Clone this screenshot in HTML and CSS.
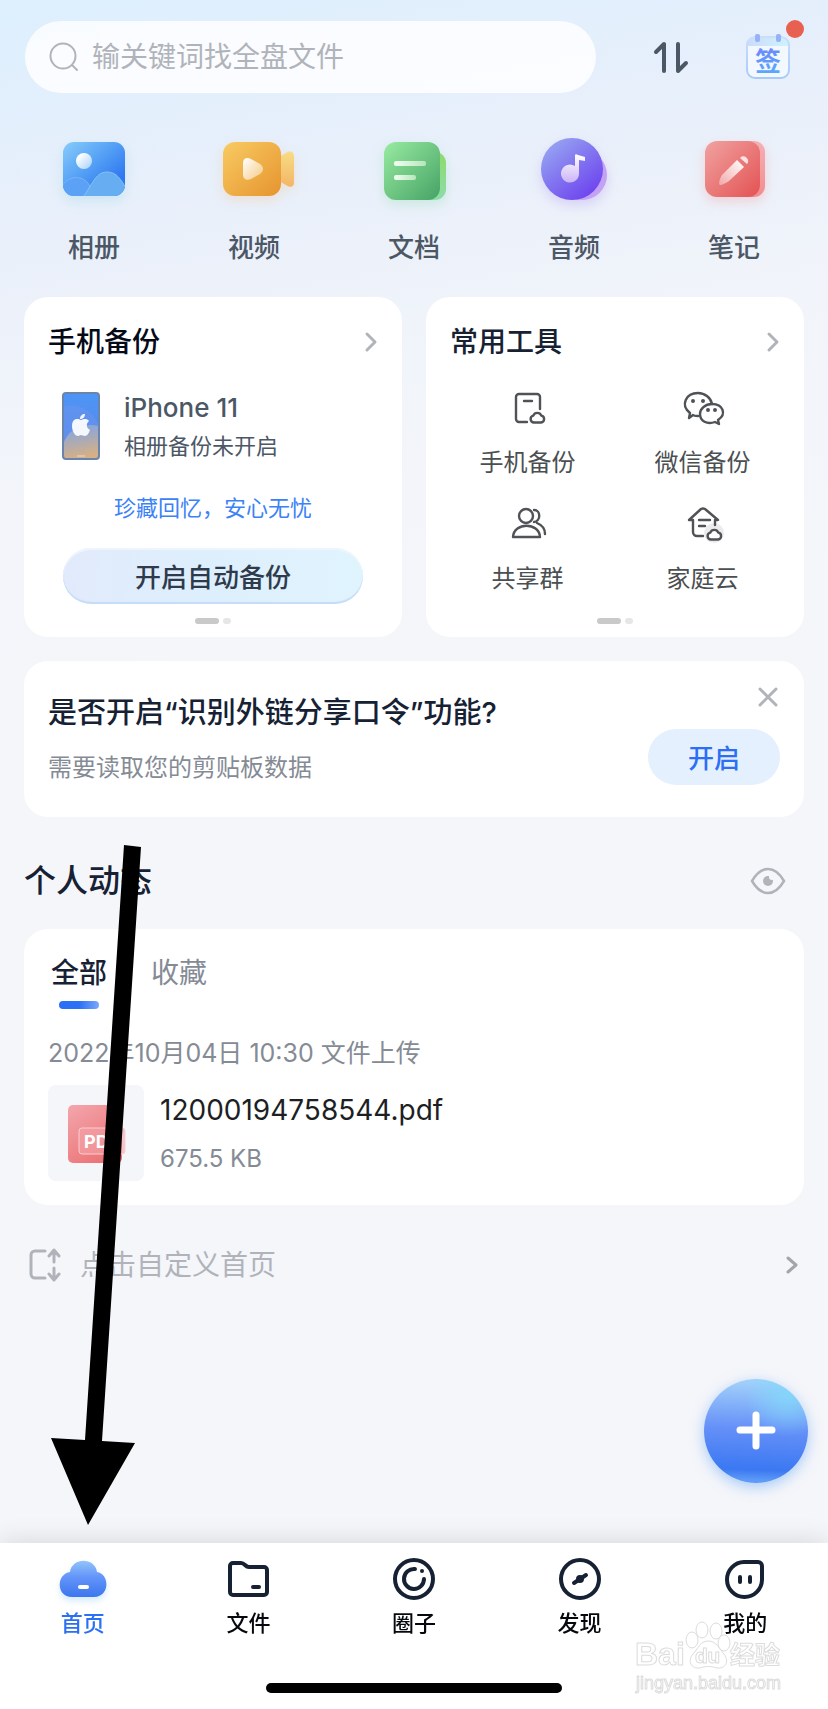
FILE: index.html
```
<!DOCTYPE html>
<html lang="zh-CN">
<head>
    <meta charset="UTF-8">
    <meta name="viewport" content="width=device-width, initial-scale=1.0">
    <title>首页</title>
    <link rel="stylesheet" href="styles.css">
</head>
<body>
    <div class="page">
        <header class="topbar">
            <label class="search">
                <svg width="30" height="30" viewBox="0 0 30 30" fill="none" stroke="#b0b4ba" stroke-width="2" stroke-linecap="round">
                    <circle cx="14" cy="14" r="12.5"/>
                    <path d="M23 23l5 5"/>
                </svg>
                <input type="search" placeholder="输关键词找全盘文件" aria-label="搜索">
            </label>
            <button class="icon-btn" aria-label="传输列表">
                <svg width="36" height="34" viewBox="0 0 36 34" fill="none" stroke="#4c5766" stroke-width="4" stroke-linecap="round" stroke-linejoin="round">
                    <path d="M3 12l8-8v27"/>
                    <path d="M25 4v27l8-8"/>
                </svg>
            </button>
            <button class="icon-btn sign" aria-label="签到">
                <svg width="44" height="46" viewBox="0 0 44 46">
                    <defs>
                        <linearGradient id="signText" x1="0" y1="0" x2="0" y2="1">
                            <stop offset="0" stop-color="#6f86fb"/>
                            <stop offset="1" stop-color="#57adfb"/>
                        </linearGradient>
                        <linearGradient id="signTop" x1="0" y1="0" x2="1" y2="0">
                            <stop offset="0" stop-color="#ccdbfb"/>
                            <stop offset="1" stop-color="#cdf3fd"/>
                        </linearGradient>
                        <linearGradient id="signLine" x1="0" y1="0" x2="0" y2="1">
                            <stop offset="0" stop-color="#cddcfb"/>
                            <stop offset="1" stop-color="#a6cbfa"/>
                        </linearGradient>
                    </defs>
                    <rect x="1" y="3" width="42" height="41" rx="8" fill="#f3f8fe"/>
                    <path d="M1 12v-1a8 8 0 0 1 8-8h26a8 8 0 0 1 8 8v1z" fill="url(#signTop)"/>
                    <rect x="1" y="3" width="42" height="41" rx="8" fill="none" stroke="url(#signLine)" stroke-width="2"/>
                    <rect x="9" y="0" width="5" height="8" rx="2" fill="#96b1f6"/>
                    <rect x="30" y="0" width="5" height="8" rx="2" fill="#96b1f6"/>
                    <text x="22" y="37" text-anchor="middle" class="sign-text" fill="url(#signText)">签</text>
                </svg>
                <span class="badge"></span>
            </button>
        </header>

        <nav class="apps">
            <a href="#">
                <svg class="glow-blue" width="80" height="72" viewBox="0 0 80 72">
                    <defs>
                        <linearGradient id="album" x1="0" y1="0" x2="1" y2="1">
                            <stop offset="0" stop-color="#88cdfb"/>
                            <stop offset=".45" stop-color="#549ff5"/>
                            <stop offset=".8" stop-color="#2f78f0"/>
                        </linearGradient>
                        <linearGradient id="moon" x1="0" y1="0" x2="1" y2="1">
                            <stop offset="0.2" stop-color="#fff"/>
                            <stop offset="1" stop-color="#9fd0fa"/>
                        </linearGradient>
                        <clipPath id="albumClip"><rect x="9" y="8" width="62" height="54" rx="11"/></clipPath>
                    </defs>
                    <g clip-path="url(#albumClip)">
                        <rect x="9" y="8" width="62" height="54" fill="url(#album)"/>
                        <path d="M7 54C13 41 29 40 36 52l-6 12H7z" fill="#5ba1f5" stroke="#78b4f8"/>
                        <path d="M29 63C38 52 41 38 53 38c10 0 14 8 19 16v10H29z" fill="#66adf2" stroke="#86c2f8"/>
                    </g>
                    <circle cx="30" cy="27" r="8" fill="url(#moon)"/>
                </svg>
                <span>相册</span>
            </a>
            <a href="#">
                <svg class="glow-orange" width="80" height="72" viewBox="0 0 80 72">
                    <defs>
                        <linearGradient id="video" x1="0" y1="0" x2="1" y2="1">
                            <stop offset="0" stop-color="#f9cb62"/>
                            <stop offset="1" stop-color="#e6942f"/>
                        </linearGradient>
                        <linearGradient id="lens" x1="0" y1="0" x2="0" y2="1">
                            <stop offset="0" stop-color="#f8dc85"/>
                            <stop offset="1" stop-color="#f3b566"/>
                        </linearGradient>
                        <linearGradient id="play" x1="0" y1="0" x2="1" y2="1">
                            <stop offset="0" stop-color="#fff"/>
                            <stop offset="1" stop-color="#f5c983"/>
                        </linearGradient>
                    </defs>
                    <path d="M65 23l7-4c4-3 8-1 8 3v27c0 4-4 5-8 2l-7-4z" fill="url(#lens)"/>
                    <rect x="9" y="8" width="58" height="54" rx="12" fill="url(#video)"/>
                    <path d="M29 29c0-5 4-6 8-4l9 5c4 3 4 7 0 10l-9 5c-4 2-8 0-8-4z" fill="url(#play)"/>
                </svg>
                <span>视频</span>
            </a>
            <a href="#">
                <svg class="glow-green" width="80" height="72" viewBox="0 0 80 72">
                    <defs>
                        <linearGradient id="doc" x1="0" y1="0" x2="1" y2="1">
                            <stop offset="0" stop-color="#98eba1"/>
                            <stop offset="1" stop-color="#46a365"/>
                        </linearGradient>
                        <linearGradient id="docBack" x1="0" y1="0" x2="0" y2="1">
                            <stop offset="0" stop-color="#8edb68"/>
                            <stop offset="1" stop-color="#8cdcab"/>
                        </linearGradient>
                        <linearGradient id="docLine" x1="0" y1="0" x2="1" y2="0">
                            <stop offset="0" stop-color="#f2fdf2"/>
                            <stop offset="1" stop-color="#b5e6bb"/>
                        </linearGradient>
                    </defs>
                    <rect x="30" y="18" width="42" height="48" rx="11" fill="url(#docBack)"/>
                    <rect x="10" y="8" width="56" height="58" rx="12" fill="url(#doc)"/>
                    <rect x="20" y="27" width="32" height="5" rx="2" fill="url(#docLine)"/>
                    <rect x="20" y="41" width="22" height="5" rx="2" fill="url(#docLine)"/>
                </svg>
                <span>文档</span>
            </a>
            <a href="#">
                <svg class="glow-purple" width="80" height="72" viewBox="0 0 80 72">
                    <defs>
                        <linearGradient id="audio" x1="0" y1="0" x2=".8" y2="1">
                            <stop offset="0" stop-color="#9bb0f2"/>
                            <stop offset="1" stop-color="#6c40ee"/>
                        </linearGradient>
                        <linearGradient id="note" x1="0" y1="0" x2="0" y2="1">
                            <stop offset="0" stop-color="#fff"/>
                            <stop offset="1" stop-color="#cbb4f6"/>
                        </linearGradient>
                    </defs>
                    <circle cx="48" cy="41" r="25" fill="#c3a2f5"/>
                    <circle cx="38" cy="35" r="31" fill="url(#audio)"/>
                    <path d="M41 22c0-2 1-2 3-1l7 2v4l-6-1v13a9 9 0 1 1-4-7z" fill="url(#note)"/>
                </svg>
                <span>音频</span>
            </a>
            <a href="#">
                <svg class="glow-red" width="80" height="72" viewBox="0 0 80 72">
                    <defs>
                        <linearGradient id="memo" x1="0" y1="0" x2="1" y2="1">
                            <stop offset="0" stop-color="#f0a3a1"/>
                            <stop offset="1" stop-color="#e45253"/>
                        </linearGradient>
                        <linearGradient id="memoBack" x1="0" y1="0" x2="0" y2="1">
                            <stop offset="0" stop-color="#f5b0b4"/>
                            <stop offset="1" stop-color="#f28c8e"/>
                        </linearGradient>
                        <linearGradient id="pencil" x1="1" y1="0" x2="0" y2="1">
                            <stop offset="0" stop-color="#fff"/>
                            <stop offset="1" stop-color="#f2a9a9"/>
                        </linearGradient>
                    </defs>
                    <rect x="30" y="7" width="41" height="56" rx="11" fill="url(#memoBack)"/>
                    <rect x="11" y="7" width="55" height="56" rx="12" fill="url(#memo)"/>
                    <path d="M43 26l7 7-15 14c-3 2-7 4-9 4-2-1 0-7 2-10z" fill="url(#pencil)"/>
                    <path d="M46 24c4-5 11 2 7 6z" fill="#fbe3e2"/>
                </svg>
                <span>笔记</span>
            </a>
        </nav>

        <main class="content">
            <div class="cards">
                <section class="card">
                    <div class="card-head">
                        <h2 class="black">手机备份</h2>
                        <svg width="12" height="20" viewBox="0 0 12 20" class="chevron"><path d="M2 2l8 8-8 8"/></svg>
                    </div>
                    <div class="device">
                        <svg width="38" height="68" viewBox="0 0 38 68">
                            <defs>
                                <linearGradient id="phone" x1="0" y1="0" x2="0" y2="1">
                                    <stop offset="0" stop-color="#4c96f6"/>
                                    <stop offset="1" stop-color="#5d80e2"/>
                                </linearGradient>
                                <linearGradient id="sand" x1="0" y1="0" x2="0.2" y2="1">
                                    <stop offset="0" stop-color="#7ba4ec"/>
                                    <stop offset="1" stop-color="#d5b086"/>
                                </linearGradient>
                            </defs>
                            <rect x="1" y="1" width="36" height="66" rx="3" fill="url(#phone)"/>
                            <path d="M1 14c15-3 31 4 36 20v20H1z" fill="#6b95f0" opacity=".5"/>
                            <path d="M1 53c4-16 20-23 36-19v33H1z" fill="url(#sand)"/>
                            <rect x="1" y="1" width="36" height="66" rx="3" fill="none" stroke="#6b84ab" stroke-width="2"/>
                            <path d="M19 28c-3-2-9-2-9 6 0 5 3 10 6 10 1 0 2-1 3-1s2 1 4 1c2 0 4-3 5-6-4-2-4-7-1-9-2-3-6-2-8-1zM18 27c0-3 2-5 5-5 0 3-2 5-5 5z" fill="#f5f7fe"/>
                            <rect x="15" y="63" width="8" height="2" fill="#d9c5b0"/>
                        </svg>
                        <div>
                            <div class="device-name">iPhone 11</div>
                            <div class="device-state">相册备份未开启</div>
                        </div>
                    </div>
                    <p class="slogan">珍藏回忆，安心无忧</p>
                    <button class="backup-btn">开启自动备份</button>
                    <div class="dots"><i></i><i></i></div>
                </section>

                <section class="card">
                    <div class="card-head">
                        <h2>常用工具</h2>
                        <svg width="12" height="20" viewBox="0 0 12 20" class="chevron"><path d="M2 2l8 8-8 8"/></svg>
                    </div>
                    <div class="tools">
                        <a href="#">
                            <svg width="40" height="36" viewBox="0 0 40 36" class="line">
                                <path d="M19 32h-8a3 3 0 0 1-3-3V7a3 3 0 0 1 3-3h18a3 3 0 0 1 3 3v12M16 11h8"/>
                                <path d="M26 32.500A3.500 3.500 0 0 1 25.300 25.600A4.300 4.300 0 0 1 33.300 25.600A3.500 3.500 0 0 1 33 32.500z"/>
                            </svg>
                            <span>手机备份</span>
                        </a>
                        <a href="#">
                            <svg width="40" height="36" viewBox="0 0 40 36" class="line">
                                <path d="M15 26c-2 0-4 0-5-1l-4 3 1-5C-3 15 3 3 15 3c7 0 13 5 14 11"/>
                                <path d="M35 30l1 4-4-2c-8 3-15-1-15-8 0-5 5-10 12-10 11 0 15 10 6 16z"/>
                                <path d="M10 11v0M20 11v0M25 20v0M32 20v0" stroke-width="4"/>
                            </svg>
                            <span>微信备份</span>
                        </a>
                        <a href="#">
                            <svg width="40" height="36" viewBox="0 0 40 36" class="line">
                                <circle cx="18" cy="10" r="7"/>
                                <path d="M5 31c1-15 26-15 27 0zM26 4c7 0 7 11 0 12M29 17c5 2 8 6 8 11"/>
                            </svg>
                            <span>共享群</span>
                        </a>
                        <a href="#">
                            <svg width="40" height="36" viewBox="0 0 40 36" class="line">
                                <circle cx="31" cy="27" r="10" fill="#ebebed" stroke="none"/>
                                <path d="M20 30h-6a4 4 0 0 1-4-4V14H6L18 3q2-1 4 0l13 11h-3v5M16 14h11M16 20h6"/>
                                <path d="M28 33.500A3.500 3.500 0 0 1 27.300 26.600A4.300 4.300 0 0 1 35.300 26.600A3.500 3.500 0 0 1 35 33.500z" fill="#fff"/>
                            </svg>
                            <span>家庭云</span>
                        </a>
                    </div>
                    <div class="dots"><i></i><i></i></div>
                </section>
            </div>

            <section class="card prompt">
                <div>
                    <h2>是否开启“识别外链分享口令”功能?</h2>
                    <p>需要读取您的剪贴板数据</p>
                </div>
                <div class="prompt-side">
                    <button class="close" aria-label="关闭">
                        <svg width="20" height="20" viewBox="0 0 20 20"><path d="M2 2l16 16M18 2L2 18"/></svg>
                    </button>
                    <button class="open-btn">开启</button>
                </div>
            </section>

            <div class="section-head">
                <h1>个人动态</h1>
                <button class="icon-btn" aria-label="隐藏动态">
                    <svg width="36" height="26" viewBox="0 0 36 26">
                        <path d="M2 13Q9 1 18 1t16 12Q27 25 18 25T2 13z" fill="none" stroke="#b0b4ba" stroke-width="2.5"/>
                        <circle cx="18" cy="13" r="5" fill="#b0b4ba"/>
                        <circle cx="22" cy="9" r="3" fill="#f5f6fa"/>
                    </svg>
                </button>
            </div>

            <section class="card feed">
                <div class="feed-tabs">
                    <button class="active">全部</button>
                    <button>收藏</button>
                </div>
                <div class="feed-time">2022年10月04日 10:30 文件上传</div>
                <a class="file" href="#">
                    <span class="thumb">
                        <svg width="60" height="60" viewBox="0 0 60 60">
                            <defs>
                                <linearGradient id="pdf" x1="0" y1="0" x2="0.6" y2="1">
                                    <stop offset="0" stop-color="#f3a6ad"/>
                                    <stop offset="1" stop-color="#ec7476"/>
                                </linearGradient>
                            </defs>
                            <rect x="2" y="2" width="54" height="58" rx="5" fill="url(#pdf)"/>
                            <rect x="13" y="25" width="46" height="26" rx="3" fill="#f3a3a8" fill-opacity=".6" stroke="#f9cdd1"/>
                            <text x="18" y="45" class="pdf-text">PDF</text>
                        </svg>
                    </span>
                    <span class="file-info">
                        <span class="file-name">12000194758544.pdf</span>
                        <span class="file-size">675.5 KB</span>
                    </span>
                </a>
            </section>

            <a class="customize" href="#">
                <svg width="34" height="34" viewBox="0 0 34 34" fill="none" stroke="#b0b4ba" stroke-width="3" stroke-linecap="round" stroke-linejoin="round">
                    <path d="M17 3H7a4 4 0 0 0-4 4v19a4 4 0 0 0 4 4h10M26 14V3M21 8l5-6 5 6M26 20v11M21 26l5 6 5-6"/>
                </svg>
                <span>点击自定义首页</span>
                <svg width="12" height="20" viewBox="0 0 12 20" class="chevron"><path d="M2 3l8 7-8 7"/></svg>
            </a>
        </main>

        <button class="fab" aria-label="新建">
            <svg width="38" height="38" viewBox="0 0 38 38"><path d="M19 3v31M3 18h32" stroke="#fff" stroke-width="7" stroke-linecap="round"/></svg>
        </button>

        <footer class="bottom">
            <nav class="tabbar">
                <a href="#" class="active">
                    <svg width="48" height="44" viewBox="0 0 48 44" class="glow-tab">
                        <defs>
                            <linearGradient id="cloud" x1="0" y1="0" x2="0" y2="1">
                                <stop offset="0" stop-color="#93c5fb"/>
                                <stop offset=".45" stop-color="#6394fa"/>
                                <stop offset="1" stop-color="#3b76ee"/>
                            </linearGradient>
                        </defs>
                        <path d="M13 40C-3 40-3 17 11 15 13 0 36 0 38 15c13 2 13 25-3 25z" fill="url(#cloud)"/>
                        <rect x="19" y="28" width="11" height="4" rx="2" fill="#fff"/>
                    </svg>
                    <span>首页</span>
                </a>
                <a href="#">
                    <svg width="44" height="44" viewBox="0 0 44 44" class="tab-line">
                        <path d="M4 9a3 3 0 0 1 3-3h8c4 0 4 4 8 4h15a3 3 0 0 1 3 3v22a3 3 0 0 1-3 3H7a3 3 0 0 1-3-3zM27 30h6"/>
                    </svg>
                    <span>文件</span>
                </a>
                <a href="#">
                    <svg width="44" height="44" viewBox="0 0 44 44" class="tab-line">
                        <circle cx="22" cy="22" r="19"/>
                        <path d="M23 12A10 10 0 1 0 32 22"/>
                        <path d="M30 14v0"/>
                    </svg>
                    <span>圈子</span>
                </a>
                <a href="#">
                    <svg width="44" height="44" viewBox="0 0 44 44" class="tab-line">
                        <circle cx="22" cy="22" r="19"/>
                        <path d="M16 26l12-8" stroke-width="4"/>
                        <circle cx="22" cy="22" r="3" fill="#162234" stroke-width="2"/>
                    </svg>
                    <span>发现</span>
                </a>
                <a href="#">
                    <svg width="44" height="44" viewBox="0 0 44 44" class="tab-line">
                        <path d="M21 5h14a4 4 0 0 1 4 4v14A17.500 17.500 0 1 1 21 5z"/>
                        <path d="M17 20v5M27 20v5" stroke-width="4"/>
                    </svg>
                    <span>我的</span>
                </a>
            </nav>
            <div class="home-bar"></div>

            <div class="watermark">
                <svg width="150" height="72" viewBox="0 0 150 72">
                    <g fill="#fff" fill-opacity=".8" stroke="#dcdcdc" stroke-width="1">
                        <ellipse cx="57" cy="19" rx="6" ry="8"/>
                        <ellipse cx="67" cy="9" rx="6" ry="8"/>
                        <ellipse cx="81" cy="10" rx="6" ry="8"/>
                        <ellipse cx="89" cy="22" rx="6" ry="8"/>
                        <path d="M73 20c9 0 11 8 16 13 6 8 1 15-7 14-6-2-11-2-17 0-9 1-13-7-7-14 5-5 7-13 15-13z"/>
                        <text x="0" y="44" class="wm-latin">Bai</text>
                        <text x="60" y="42" class="wm-du">du</text>
                        <text x="95" y="43" class="wm-cn">经验</text>
                        <text x="1" y="68" class="wm-url">jingyan.baidu.com</text>
                    </g>
                </svg>
            </div>
        </footer>

        <!-- arrow pointing to the 首页 tab -->
        <svg class="arrow" width="90" height="680" viewBox="0 0 90 680">
            <path d="M73 0l17 2-39 594 33 2-47 82L0 593l34 2z"/>
        </svg>
    </div>
</body>
</html>
```
FILE: styles.css
```
* {
    box-sizing: border-box;
}
body {
    margin: 0;
    font-family: Inter, "Noto Sans CJK SC", sans-serif;
    color: #162234;
    background: #f5f6fa;
}
h1, h2, p {
    margin: 0;
    font-weight: 500;
}
a {
    color: inherit;
    text-decoration: none;
}
button {
    font-family: inherit;
    color: inherit;
    border: none;
    padding: 0;
    background: none;
    cursor: pointer;
}
svg {
    display: block;
    flex-shrink: 0;
    overflow: visible;
}
.page {
    position: relative;
    display: flex;
    flex-direction: column;
    min-height: 100vh;
    background: linear-gradient(170deg, #ddeffd 0, #e3effc 120px, #eaf0fa 260px, #f1f4fa 420px, #f5f6fa 700px);
}

/* top */
.topbar {
    display: flex;
    align-items: center;
    padding: 21px 38px 0 25px;
}
.search {
    flex: 1;
    display: flex;
    align-items: center;
    gap: 13px;
    height: 72px;
    padding: 0 24px;
    border-radius: 36px;
    background: rgba(255, 255, 255, 0.82);
}
.search input {
    flex: 1;
    min-width: 0;
    border: none;
    outline: none;
    padding: 0;
    background: none;
    font-family: inherit;
    font-size: 28px;
}
.search input::placeholder {
    color: #b0b4ba;
    opacity: 1;
}
.topbar .icon-btn {
    margin-left: 57px;
}
.sign {
    position: relative;
}
.sign-text {
    font-size: 26px;
    font-weight: 700;
}
.badge {
    position: absolute;
    top: -14px;
    right: -14px;
    width: 18px;
    height: 18px;
    border-radius: 50%;
    background: #e8604f;
}
.apps {
    display: grid;
    grid-template-columns: repeat(5, 1fr);
    padding: 41px 14px 0;
}
.apps a {
    display: flex;
    flex-direction: column;
    align-items: center;
    gap: 24px;
    font-size: 26px;
    line-height: 36px;
    font-weight: 500;
    color: #4c5766;
}
.glow-blue { filter: drop-shadow(0 5px 6px rgba(120, 200, 220, 0.25)); }
.glow-orange { filter: drop-shadow(0 5px 6px rgba(240, 180, 120, 0.25)); }
.glow-green { filter: drop-shadow(0 5px 6px rgba(110, 210, 150, 0.25)); }
.glow-purple { filter: drop-shadow(0 5px 6px rgba(150, 110, 240, 0.25)); }
.glow-red { filter: drop-shadow(0 5px 6px rgba(240, 120, 120, 0.25)); }

/* cards */
.content {
    padding: 31px 24px 0;
}
.card {
    border-radius: 24px;
    background: #fff;
}
.cards {
    display: grid;
    grid-template-columns: 1fr 1fr;
    gap: 24px;
}
.cards .card {
    display: flex;
    flex-direction: column;
    min-height: 340px;
    padding-bottom: 13px;
}
.card-head {
    display: flex;
    justify-content: space-between;
    align-items: center;
    padding: 25px 25px 0 24px;
}
h2 {
    font-size: 28px;
    line-height: 40px;
}
h2.black {
    color: #050a18;
}
.chevron {
    fill: none;
    stroke: #b0b4ba;
    stroke-width: 3;
    stroke-linecap: round;
    stroke-linejoin: round;
}
.device {
    display: flex;
    align-items: center;
    gap: 24px;
    padding: 26px 38px 0;
}
.device-name {
    font-size: 26px;
    line-height: 40px;
    font-weight: 500;
    color: #4c5766;
}
.device-state {
    font-size: 22px;
    line-height: 36px;
    color: #4c5766;
}
.slogan {
    margin-top: 28px;
    text-align: center;
    font-size: 22px;
    line-height: 32px;
    font-weight: 400;
    color: #3b82f7;
}
.backup-btn {
    height: 56px;
    margin: 24px 39px 0;
    padding-bottom: 2px;
    border-radius: 28px;
    font-size: 26px;
    font-weight: 500;
    color: #2f3b4c;
    background: linear-gradient(100deg, #e2eafc, #ddeffc 50%, #e0f4fe);
    box-shadow: inset 0 -2px 1px #c5dcf8, inset 0 2px 1px #edf6fe;
}
.dots {
    display: flex;
    justify-content: center;
    gap: 4px;
    margin-top: auto;
}
.dots i {
    width: 8px;
    height: 6px;
    border-radius: 3px;
    background: #e6e6e6;
}
.dots i:first-child {
    width: 24px;
    background: #c9c9c9;
}
.tools {
    display: grid;
    grid-template-columns: 1fr 1fr;
    row-gap: 25px;
    padding: 28px 14px 0;
}
.tools a {
    display: flex;
    flex-direction: column;
    align-items: center;
    gap: 19px;
    font-size: 24px;
    line-height: 36px;
    color: #4b4f52;
}
.line {
    fill: none;
    stroke: #4f5357;
    stroke-width: 2.4;
    stroke-linecap: round;
    stroke-linejoin: round;
}

/* clipboard prompt */
.prompt {
    display: flex;
    justify-content: space-between;
    margin-top: 24px;
    padding: 26px 24px 32px;
}
.prompt h2 {
    font-size: 29px;
    line-height: 52px;
}
.prompt p {
    margin-top: 11px;
    font-size: 24px;
    line-height: 35px;
    font-weight: 400;
    color: #858b95;
}
.prompt-side {
    display: flex;
    flex-direction: column;
    align-items: flex-end;
    justify-content: space-between;
}
.close {
    margin-right: 2px;
}
.close path {
    stroke: #b0b4ba;
    stroke-width: 3;
    stroke-linecap: round;
}
.open-btn {
    width: 132px;
    height: 56px;
    padding-bottom: 2px;
    border-radius: 28px;
    font-size: 26px;
    font-weight: 500;
    color: #2b6ff6;
    background: #e5f0fe;
}

/* feed */
.section-head {
    display: flex;
    justify-content: space-between;
    align-items: center;
    height: 112px;
    padding: 16px 18px 0 0;
}
h1 {
    font-size: 32px;
    line-height: 48px;
}
.feed {
    padding: 24px;
}
.feed-tabs {
    display: flex;
    gap: 44px;
    padding: 0 3px;
}
.feed-tabs button {
    display: flex;
    flex-direction: column;
    align-items: center;
    height: 56px;
    font-size: 28px;
    line-height: 40px;
    color: #858b95;
}
.feed-tabs .active {
    font-weight: 500;
    color: #162234;
}
.feed-tabs .active::after {
    content: "";
    width: 40px;
    height: 8px;
    margin-top: 8px;
    border-radius: 4px;
    background: linear-gradient(90deg, #2b6ff6 50%, #7ba9fa);
}
.feed-time {
    margin-top: 24px;
    font-size: 25px;
    line-height: 40px;
    color: #858b95;
}
.file {
    display: flex;
    gap: 16px;
    margin-top: 12px;
}
.thumb {
    display: flex;
    align-items: center;
    justify-content: center;
    width: 96px;
    height: 96px;
    border-radius: 8px;
    background: #f5f6fa;
}
.pdf-text {
    font-size: 18px;
    font-weight: 700;
    fill: #fff;
}
.file-info {
    display: flex;
    flex-direction: column;
    gap: 14px;
    padding-top: 5px;
}
.file-name {
    font-size: 28px;
    line-height: 40px;
    color: #1d1f24;
}
.file-size {
    font-size: 24px;
    line-height: 30px;
    color: #858b95;
}
.customize {
    display: flex;
    align-items: center;
    gap: 18px;
    margin: 40px 0;
    padding: 0 6px 0 4px;
    font-size: 28px;
    line-height: 40px;
    color: #b0b4ba;
}
.customize .chevron {
    margin-left: auto;
    stroke: #a3a5a8;
}

/* floating button */
.fab {
    position: fixed;
    right: 20px;
    bottom: 226px;
    display: flex;
    align-items: center;
    justify-content: center;
    width: 104px;
    height: 104px;
    border-radius: 50%;
    background:
        radial-gradient(circle at 80% 15%, rgba(130, 215, 250, 0.9), rgba(130, 215, 250, 0) 35%),
        linear-gradient(182deg, #a1cffa 5%, #6590f8 48%, #3b78f2 86%, #5e9bf6 96%);
    box-shadow: 0 4px 14px rgba(90, 160, 245, 0.5);
}

/* bottom bar */
.bottom {
    position: relative;
    margin-top: auto;
    height: 166px;
    padding-top: 14px;
    background: #fff;
    box-shadow: 0 -2px 24px rgba(0, 0, 0, 0.12);
}
.tabbar {
    display: grid;
    grid-template-columns: repeat(5, 1fr);
}
.tabbar a {
    display: flex;
    flex-direction: column;
    align-items: center;
    gap: 6px;
    font-size: 22px;
    line-height: 32px;
    font-weight: 500;
    color: #05080d;
}
.tabbar .active {
    color: #2b6ff6;
}
.glow-tab {
    filter: drop-shadow(0 4px 3px rgba(120, 190, 250, 0.3));
}
.tab-line {
    fill: none;
    stroke: #162234;
    stroke-width: 4;
    stroke-linecap: round;
    stroke-linejoin: round;
}
.home-bar {
    width: 296px;
    height: 10px;
    margin: 44px auto 0;
    border-radius: 5px;
    background: #000;
}
.watermark {
    position: absolute;
    right: 43px;
    bottom: 16px;
}
.wm-latin {
    font-family: "Liberation Sans", sans-serif;
    font-size: 32px;
    font-weight: 700;
}
.wm-du {
    font-size: 20px;
    font-weight: 700;
}
.wm-cn {
    font-size: 25px;
    font-weight: 700;
}
.wm-url {
    font-family: "Liberation Sans", sans-serif;
    font-size: 18px;
}
.arrow {
    position: absolute;
    left: 51px;
    top: 845px;
    pointer-events: none;
}
```
